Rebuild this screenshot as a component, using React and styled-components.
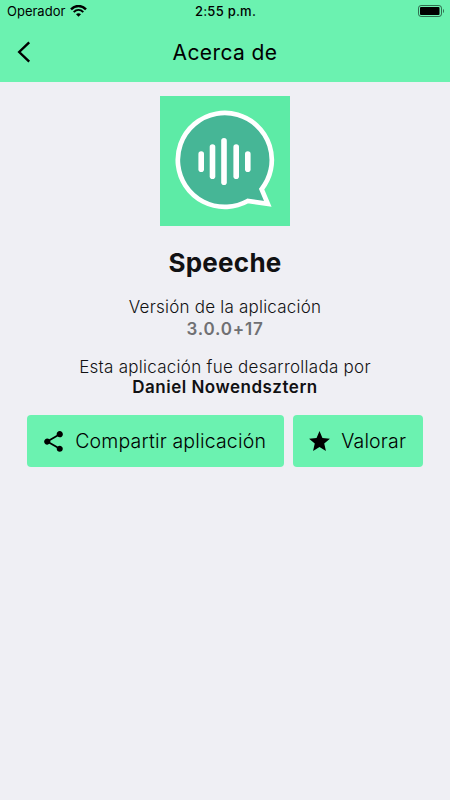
import React from "react";
import styled, { createGlobalStyle } from "styled-components";

const GlobalStyle = createGlobalStyle`
  * {
    box-sizing: border-box;
  }
  body {
    margin: 0;
    background-color: #efeff4;
    font-family: Inter, "Liberation Sans", sans-serif;
    color: #111113;
  }
`;

const MainCont = styled.div`
  display: flex;
  flex-direction: column;
  width: 450px;
  height: 800px;
  overflow: hidden;
  background-color: #efeff4;
`;

const HeaderCont = styled.header`
  height: 82.4px;
  background-color: #6bf2b0;
  color: #000;
`;

const StatusBar = styled.div`
  display: grid;
  grid-template-columns: 1fr auto 1fr;
  align-items: center;
  height: 22px;
  padding: 0 6px 0 7px;
`;

const Carrier = styled.div`
  display: flex;
  align-items: center;
  gap: 5px;
`;

const StatusText = styled.span`
  font-size: 13px;
  line-height: 22px;
  font-weight: ${(props) => props.$weight || 400};
  letter-spacing: ${(props) => props.$spacing || "0"};
  white-space: nowrap;
`;

const BatteryCont = styled.div`
  display: flex;
  justify-content: flex-end;
`;

const TitleBar = styled.div`
  display: grid;
  grid-template-columns: 50px 1fr 50px;
  align-items: center;
  height: 60px;
`;

const BackButton = styled.button`
  display: flex;
  width: 50px;
  padding: 0 0 0 16px;
  border: none;
  background: none;
  color: inherit;
`;

const Title = styled.h1`
  margin: 0;
  padding-top: 2px;
  font-size: 21px;
  line-height: 26px;
  font-weight: 400;
  letter-spacing: 0.4px;
  text-align: center;
`;

const BodyCont = styled.main`
  display: flex;
  flex-direction: column;
  align-items: center;
  padding-top: 13.6px;
`;

const LogoCont = styled.div`
  width: 130px;
  height: 130px;
  background-color: #5deba6;
`;

const AppName = styled.h2`
  margin: 20px 0 0;
  font-size: 26px;
  line-height: 34px;
  font-weight: 650;
  letter-spacing: 0.25px;
`;

const InfoCont = styled.div`
  display: flex;
  flex-direction: column;
  align-items: center;
  margin-top: ${(props) => props.$top};
`;

const Line = styled.p`
  margin: 0;
  font-size: 17px;
  line-height: ${(props) => props.$height || "21px"};
  font-weight: ${(props) => (props.$bold ? 600 : 300)};
  letter-spacing: ${(props) => props.$spacing || "0"};
  color: ${(props) => props.$color || "#111113"};
  white-space: nowrap;
`;

const ButtonsCont = styled.div`
  display: flex;
  gap: 9px;
  margin-top: 17px;
`;

const ActionButton = styled.button`
  display: flex;
  align-items: center;
  gap: 9.5px;
  width: ${(props) => props.$width};
  height: 52px;
  padding: 1px 0 0 14px;
  border: none;
  border-radius: 4px;
  background-color: #6bf2b0;
  color: #000;
  font-family: inherit;
  font-size: 19.5px;
  line-height: 25px;
  font-weight: 300;
  letter-spacing: 0.17px;
  white-space: nowrap;

  svg {
    flex: none;
    margin-left: -0.3px;
  }
`;

const WifiIcon = () => (
  <svg width="17" height="12" viewBox="0 0 17 12" fill="none" stroke="#000">
    <path d="M1 4.3C5.3 -0.1 11.7 -0.1 16 4.3" strokeWidth="2.4" />
    <path d="M3.7 7.1C6.5 4.4 10.5 4.4 13.3 7.1" strokeWidth="2" />
    <path d="M8.5 11.7L6 9.2C7.4 7.9 9.6 7.9 11 9.2Z" fill="#000" stroke="none" />
  </svg>
);

const BatteryIcon = () => (
  <svg width="26" height="12" viewBox="0 0 26 12">
    <rect x="0.5" y="0.5" width="23" height="11" rx="2.6" fill="none" stroke="#000" strokeOpacity="0.55" />
    <rect x="2" y="2" width="19.5" height="8" rx="1" fill="#000" />
    <path d="M25 4C26.2 4.6 26.2 7.4 25 8Z" fill="#000" fillOpacity="0.6" />
  </svg>
);

const BackIcon = () => (
  <svg width="16" height="22" viewBox="0 0 16 22" fill="none">
    <path d="M13.2 1.3L3.2 11L13.2 20.7" stroke="#000" strokeWidth="2.4" />
  </svg>
);

const ShareIcon = () => (
  <svg width="25" height="25" viewBox="0 0 24 24" fill="currentColor">
    <path d="M18 16.08c-.76 0-1.44.3-1.96.77L8.91 12.7c.05-.23.09-.46.09-.7s-.04-.47-.09-.7l7.05-4.11c.54.5 1.25.81 2.04.81 1.66 0 3-1.34 3-3s-1.34-3-3-3-3 1.34-3 3c0 .24.04.47.09.7L8.04 9.81C7.5 9.31 6.79 9 6 9c-1.66 0-3 1.34-3 3s1.34 3 3 3c.79 0 1.5-.31 2.04-.81l7.12 4.16c-.05.21-.08.43-.08.65 0 1.61 1.31 2.92 2.92 2.92s2.92-1.31 2.92-2.92-1.31-2.92-2.92-2.92z" />
  </svg>
);

const StarIcon = () => (
  <svg width="25" height="25" viewBox="0 0 24 24" fill="currentColor">
    <path d="M12 17.27L18.18 21l-1.64-7.03L22 9.24l-7.19-.61L12 2 9.19 8.63 2 9.24l5.46 4.73L5.82 21z" />
  </svg>
);

// x, top and bottom of each bar of the sound wave
const bars = [
  [41.2, 58, 73.3],
  [52.5, 51, 80.3],
  [64, 44.7, 86.3],
  [76.2, 51, 80.3],
  [87.8, 58, 73.3],
];

const Logo = () => (
  <svg width="130" height="130" viewBox="0 0 130 130">
    <path
      d="M101.6 93.2A47 47 0 1 0 87.7 105L107.8 107.8Z"
      fill="#46b696"
      stroke="#fff"
      strokeWidth="4.7"
      strokeLinejoin="miter"
    />
    {bars.map(([x, top, bottom]) => (
      <path
        key={x}
        d={`M${x} ${top}V${bottom}`}
        stroke="#fff"
        strokeWidth="5.6"
        strokeLinecap="round"
      />
    ))}
  </svg>
);

export default function App() {
  return (
    <MainCont>
      <GlobalStyle />
      <HeaderCont>
        <StatusBar>
          <Carrier>
            <StatusText>Operador</StatusText>
            <WifiIcon />
          </Carrier>
          <StatusText $weight={500} $spacing="0.25px">2:55 p.m.</StatusText>
          <BatteryCont>
            <BatteryIcon />
          </BatteryCont>
        </StatusBar>
        <TitleBar>
          <BackButton aria-label="Atrás">
            <BackIcon />
          </BackButton>
          <Title>Acerca de</Title>
        </TitleBar>
      </HeaderCont>

      <BodyCont>
        <LogoCont>
          <Logo />
        </LogoCont>
        <AppName>Speeche</AppName>

        <InfoCont $top="16px">
          <Line $height="22px" $spacing="0.22px">Versión de la aplicación</Line>
          <Line $bold $height="22px" $color="#707073" $spacing="0.8px">3.0.0+17</Line>
        </InfoCont>

        <InfoCont $top="17px">
          <Line $height="20px" $spacing="0.27px">Esta aplicación fue desarrollada por</Line>
          <Line $bold $spacing="0.5px">Daniel Nowendsztern</Line>
        </InfoCont>

        <ButtonsCont>
          <ActionButton $width="257px">
            <ShareIcon />
            Compartir aplicación
          </ActionButton>
          <ActionButton $width="130px">
            <StarIcon />
            Valorar
          </ActionButton>
        </ButtonsCont>
      </BodyCont>
    </MainCont>
  );
}
